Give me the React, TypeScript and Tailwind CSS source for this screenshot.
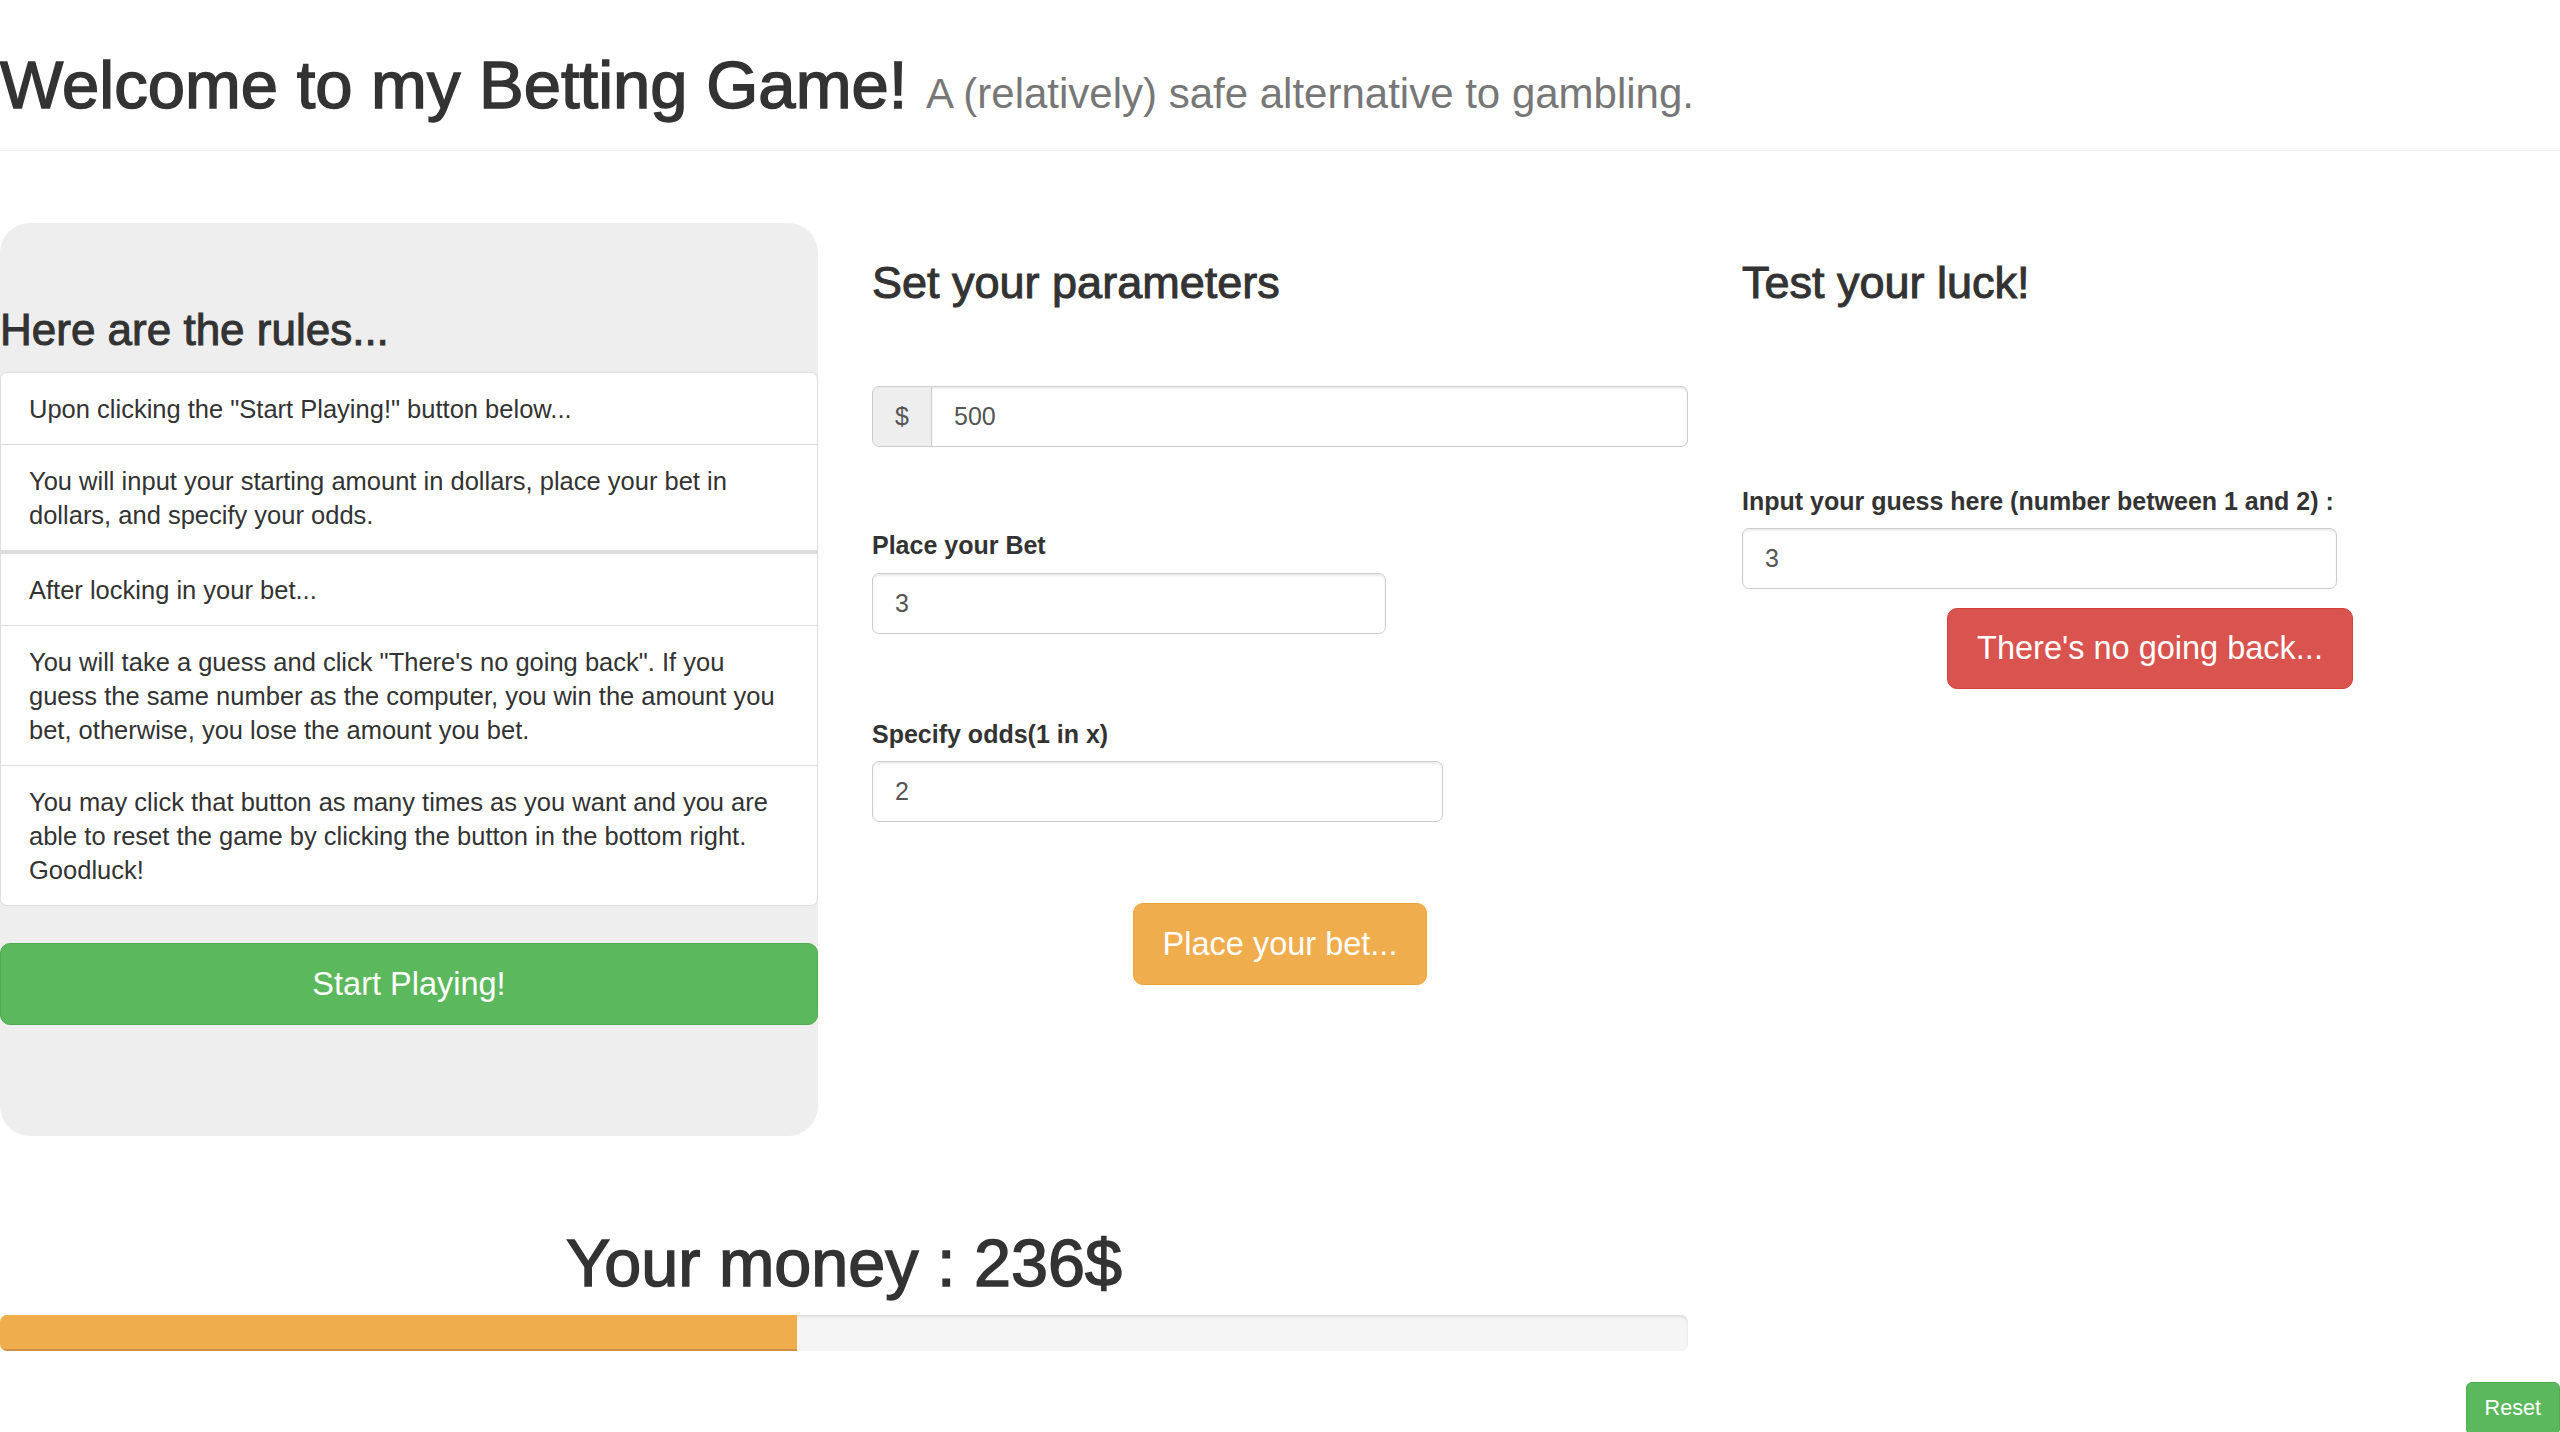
const rules = [
  'Upon clicking the "Start Playing!" button below...',
  "You will input your starting amount in dollars, place your bet in dollars, and specify your odds.",
  "After locking in your bet...",
  'You will take a guess and click "There\'s no going back". If you guess the same number as the computer, you win the amount you bet, otherwise, you lose the amount you bet.',
  "You may click that button as many times as you want and you are able to reset the game by clicking the button in the bottom right. Goodluck!",
];

const money = 236;
const start = 500;

function TextInput({ value, width }: { value: string; width: string }) {
  return (
    <input
      readOnly
      value={value}
      className={`${width} h-[61px] border border-[#ccc] rounded-[7px] bg-white px-[22px] text-[25px] text-[#555] shadow-[inset_0_2px_2px_rgba(0,0,0,0.075)] outline-none`}
    />
  );
}

function RulesPanel() {
  return (
    <div className="bg-[#eee] rounded-[30px] pt-[80px] pb-[111px]">
      <h3 className="text-[44px] leading-[53px] [-webkit-text-stroke:1px_#333]">Here are the rules...</h3>
      <ul className="mt-[16px]">
        {rules.map((r, i) => (
          <li
            key={i}
            className={`bg-white border-[#ddd] px-[28px] py-[18.5px] text-[25.5px] leading-[34px] border ${
              i > 0 ? "-mt-px" : "rounded-t-[7px]"
            } ${i === rules.length - 1 ? "rounded-b-[7px]" : ""} ${i === 1 ? "border-b-[4px]" : ""}`}
          >
            {r}
          </li>
        ))}
      </ul>
      <button className="mt-[37px] w-full h-[82px] bg-[#5cb85c] border border-[#4cae4c] rounded-[10px] text-white text-[32.5px]">
        Start Playing!
      </button>
    </div>
  );
}

function Parameters() {
  return (
    <div className="pt-[34px] flex flex-col items-start">
      <h3 className="text-[45px] leading-[52px] [-webkit-text-stroke:1px_#333]">Set your parameters</h3>
      <div className="mt-[77px] flex w-full h-[61px]">
        <span className="w-[60px] flex items-center justify-center bg-[#eee] border border-[#ccc] rounded-l-[7px] text-[25px] text-[#555]">
          $
        </span>
        <input
          readOnly
          value="500"
          className="flex-1 border border-l-0 border-[#ccc] rounded-r-[7px] px-[22px] text-[25px] text-[#555] shadow-[inset_0_2px_2px_rgba(0,0,0,0.075)] outline-none"
        />
      </div>
      <label className="mt-[80px] text-[25px] leading-[36px] font-bold">Place your Bet</label>
      <div className="mt-[10px]">
        <TextInput value="3" width="w-[514px]" />
      </div>
      <label className="mt-[82px] text-[25px] leading-[36px] font-bold">Specify odds(1 in x)</label>
      <div className="mt-[9px]">
        <TextInput value="2" width="w-[571px]" />
      </div>
      <div className="mt-[81px] w-full flex justify-center">
        <button className="h-[82px] px-[29px] bg-[#f0ad4e] border border-[#eea236] rounded-[10px] text-white text-[32.5px]">
          Place your bet...
        </button>
      </div>
    </div>
  );
}

function Luck() {
  return (
    <div className="pt-[34px] flex flex-col items-start">
      <h3 className="text-[45px] leading-[52px] [-webkit-text-stroke:1px_#333]">Test your luck!</h3>
      <label className="mt-[174px] text-[25px] leading-[36px] font-bold">
        Input your guess here (number between 1 and 2) :
      </label>
      <div className="mt-[9px]">
        <TextInput value="3" width="w-[595px]" />
      </div>
      <div className="mt-[19px] w-full flex justify-center">
        <button className="h-[81px] px-[29px] bg-[#d9534f] border border-[#d43f3a] rounded-[10px] text-white text-[32.5px]">
          There's no going back...
        </button>
      </div>
    </div>
  );
}

export default function App() {
  return (
    <div className="min-h-screen bg-white text-[#333] font-['Liberation_Sans',Arial,sans-serif]">
      <header className="pt-[48px] pb-[20px] border-b border-[#eee]">
        <h1 className="text-[67px] leading-[73px] whitespace-nowrap [-webkit-text-stroke:1.5px_#333]">
          Welcome to my Betting Game!{" "}
          <small className="text-[42px] text-[#777] [-webkit-text-stroke:0]">
            A (relatively) safe alternative to gambling.
          </small>
        </h1>
      </header>

      <div className="mt-[72px] grid grid-cols-[818px_816px_816px] gap-x-[54px] items-start">
        <RulesPanel />
        <Parameters />
        <Luck />
      </div>

      <div className="mt-[91px] w-[1688px]">
        <h1 className="text-center text-[66.5px] leading-[72px] [-webkit-text-stroke:1.5px_#333]">
          Your money : {money}$
        </h1>
        <div className="mt-[16px] h-[36px] bg-[#f5f5f5] rounded-[7px] overflow-hidden shadow-[inset_0_2px_3px_rgba(0,0,0,0.1)]">
          <div
            className="h-full bg-[#f0ad4e] shadow-[inset_0_-2px_0_rgba(0,0,0,0.15)]"
            style={{ width: `${(money / start) * 100}%` }}
          />
        </div>
      </div>

      <div className="mt-[31px] flex justify-end">
        <button className="h-[53px] px-[18px] bg-[#5cb85c] border border-[#4cae4c] rounded-[6px] text-white text-[21.6px]">
          Reset
        </button>
      </div>
    </div>
  );
}
